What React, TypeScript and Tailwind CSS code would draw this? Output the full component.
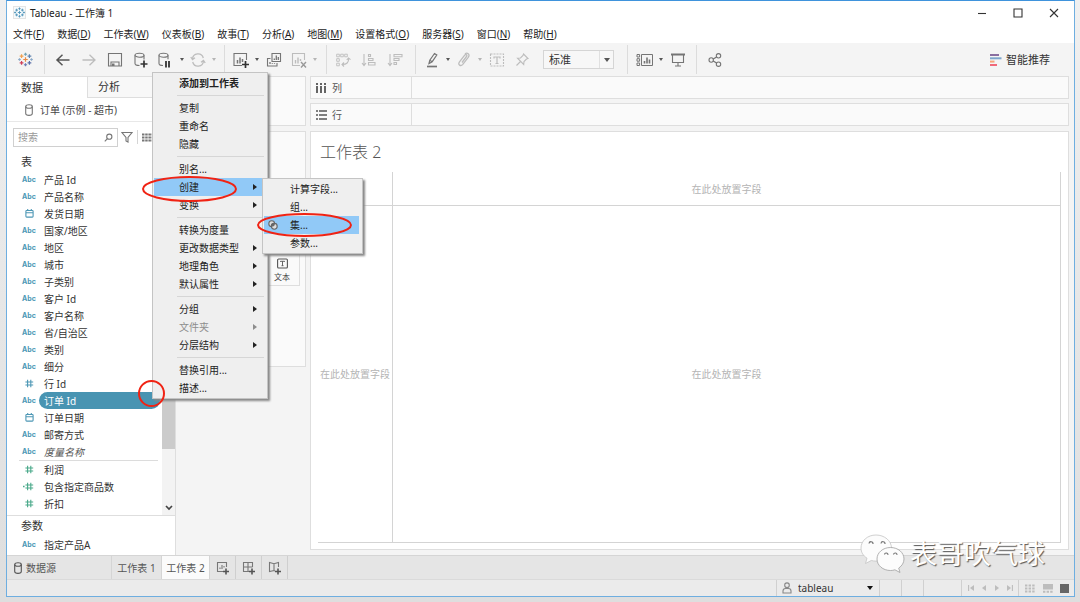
import type { ReactNode } from "react"

type Kind = "abc" | "date" | "dimNum" | "num" | "calc"

const MENUS = [
  ["文件", "F"], ["数据", "D"], ["工作表", "W"], ["仪表板", "B"], ["故事", "T"], ["分析", "A"],
  ["地图", "M"], ["设置格式", "O"], ["服务器", "S"], ["窗口", "N"], ["帮助", "H"],
]

const DIMENSIONS: { name: string; kind: Kind; selected?: boolean; italic?: boolean }[] = [
  { name: "产品 Id", kind: "abc" },
  { name: "产品名称", kind: "abc" },
  { name: "发货日期", kind: "date" },
  { name: "国家/地区", kind: "abc" },
  { name: "地区", kind: "abc" },
  { name: "城市", kind: "abc" },
  { name: "子类别", kind: "abc" },
  { name: "客户 Id", kind: "abc" },
  { name: "客户名称", kind: "abc" },
  { name: "省/自治区", kind: "abc" },
  { name: "类别", kind: "abc" },
  { name: "细分", kind: "abc" },
  { name: "行 Id", kind: "dimNum" },
  { name: "订单 Id", kind: "abc", selected: true },
  { name: "订单日期", kind: "date" },
  { name: "邮寄方式", kind: "abc" },
  { name: "度量名称", kind: "abc", italic: true },
]

const MEASURES: { name: string; kind: Kind }[] = [
  { name: "利润", kind: "num" },
  { name: "包含指定商品数", kind: "calc" },
  { name: "折扣", kind: "num" },
]

// Mỗi nhóm được ngăn cách bằng một đường kẻ
const CONTEXT_MENU: { label: string; bold?: boolean; sub?: boolean; active?: boolean; disabled?: boolean }[][] = [
  [{ label: "添加到工作表", bold: true }],
  [{ label: "复制" }, { label: "重命名" }, { label: "隐藏" }],
  [{ label: "别名..." }, { label: "创建", sub: true, active: true }, { label: "变换", sub: true }],
  [
    { label: "转换为度量" },
    { label: "更改数据类型", sub: true },
    { label: "地理角色", sub: true },
    { label: "默认属性", sub: true },
  ],
  [{ label: "分组", sub: true }, { label: "文件夹", sub: true, disabled: true }, { label: "分层结构", sub: true }],
  [{ label: "替换引用..." }, { label: "描述..." }],
]

const SUB_MENU = ["计算字段...", "组...", "集...", "参数..."]

function Icon({ w = 16, h = 16, className = "", children }: { w?: number; h?: number; className?: string; children: ReactNode }) {
  return (
    <svg width={w} height={h} viewBox={`0 0 ${w} ${h}`} fill="none" stroke="currentColor" strokeWidth="1.1" className={`shrink-0 ${className}`}>
      {children}
    </svg>
  )
}

function Tool({ label, wide, dim, children }: { label: string; wide?: boolean; dim?: boolean; children: ReactNode }) {
  return (
    <button aria-label={label} className={`flex items-center justify-center ${wide ? "w-[26px]" : "w-6"} ${dim ? "text-[#bdbdbd]" : "text-[#757575]"}`}>
      {children}
    </button>
  )
}

function Caret({ dim }: { dim?: boolean }) {
  return (
    <button aria-label="更多" className={`flex w-2 items-center justify-center ${dim ? "text-[#b5b5b5]" : "text-[#555]"}`}>
      <svg width="4" height="3" viewBox="0 0 4 3" fill="currentColor"><path d="M0 0h4L2 3z" /></svg>
    </button>
  )
}

function Logo({ size, mono }: { size: number; mono?: boolean }) {
  const c = mono ? ["#4f93b8"] : ["#eb8a44", "#6fa3b5", "#d0405a", "#5b6fa8", "#f0a050", "#5f83b0", "#6b7bb5", "#8aa9c8", "#8aa9c8"]
  const pts = [[8, 8, 2.4], [8, 2.4, 1.7], [3.8, 11.5, 2], [12.2, 11.5, 2], [3.8, 4.5, 2], [12.2, 4.5, 2], [8, 13.6, 1.7], [1.6, 8, 1.4], [14.4, 8, 1.4]]
  return (
    <svg width={size} height={size} viewBox="0 0 16 16" className="shrink-0">
      {pts.map(([x, y, r], i) => (
        <path key={i} d={`M${x - r} ${y}h${r * 2}M${x} ${y - r}v${r * 2}`} stroke={c[i % c.length]} strokeWidth="1.3" />
      ))}
    </svg>
  )
}

function Cylinder({ className }: { className?: string }) {
  return (
    <Icon w={8} h={12} className={className}>
      <ellipse cx="4" cy="2.5" rx="3.3" ry="1.8" />
      <path d="M.7 2.5v7c0 1 1.5 1.9 3.3 1.9s3.3-.9 3.3-1.9v-7" />
    </Icon>
  )
}

function KindIcon({ kind }: { kind: Kind }) {
  if (kind === "abc") return <span className="font-[Inter,sans-serif] text-[7px] font-bold text-[#4d97b5]">Abc</span>
  if (kind === "date") {
    return (
      <Icon w={9} h={9} className="text-[#4d97b5]">
        <rect x=".9" y="1.5" width="7.2" height="6.6" rx=".8" />
        <path d="M1 3.8h7M2.7 0v2M6.3 0v2" />
      </Icon>
    )
  }
  return (
    <Icon w={12} h={9} className={kind === "dimNum" ? "text-[#4d97b5]" : "text-[#4aa98a]"}>
      <path d="M4.6 .8v7.4M7.8 .8v7.4M2.4 3h7.8M2.4 6h7.8" />
      {kind === "calc" && <path d="M0 4.5h1.6" strokeWidth="1.6" />}
    </Icon>
  )
}

function Field({ name, kind, selected, italic }: { name: string; kind: Kind; selected?: boolean; italic?: boolean }) {
  return (
    <button className="flex h-[17px] w-full items-center pl-3 text-left">
      <span className="flex w-5 shrink-0 items-center justify-center">
        <KindIcon kind={kind} />
      </span>
      <span
        className={`mr-0.5 flex h-[17px] flex-1 items-center pl-[5px] whitespace-nowrap
          ${selected ? "rounded-full bg-[#4894b2] text-white" : italic ? "italic text-[#555]" : "text-[#333]"}`}
      >
        {name}
      </span>
    </button>
  )
}

function Toolbar() {
  const sep = "w-px self-stretch my-0.5 bg-[#dcdcdc]"
  return (
    <div className="flex h-[33px] shrink-0 items-stretch bg-[#f4f4f4]">
      <button aria-label="开始页面" className="flex w-[37px] items-center justify-center">
        <Logo size={15} />
      </button>
      <div className={sep} />
      <div className="flex pr-1.5 pl-[5px]">
        <Tool wide label="撤消"><Icon><path d="M14.5 8H2M7.5 2.8L2 8l5.5 5.2" strokeWidth="1.5" stroke="#555" /></Icon></Tool>
        <Tool wide dim label="重做"><Icon><path d="M1.5 8H14M8.5 2.8L14 8l-5.5 5.2" strokeWidth="1.3" /></Icon></Tool>
        <Tool wide label="保存">
          <Icon><path d="M1.5 1.5h13v12.5h-13zM4 14v-4h8V14" /><path d="M5 11.500h2.500V14H5z" fill="currentColor" stroke="none" /></Icon>
        </Tool>
        <Tool wide label="新建数据源">
          <Icon><ellipse cx="6.500" cy="3.200" rx="4.500" ry="2" /><path d="M2 3.200v8.300c0 1 1.500 2 4.500 2M11 3.200v4.300" /><path d="M7.500 12h7M11 8.500v7" stroke="#333" strokeWidth="1.700" /></Icon>
        </Tool>
        <Tool label="暂停自动更新">
          <Icon><ellipse cx="5.500" cy="3.200" rx="4.500" ry="2" /><path d="M1 3.200v8.300c0 1 1.500 2 4 2M10 3.200v4" /><path d="M8 9v6.500M11 9v6.500" stroke="#333" strokeWidth="1.800" /></Icon>
        </Tool>
        <Caret />
        <Tool dim label="运行更新">
          <Icon><path d="M2.500 7a5.500 5.500 0 0 1 10.800-1M13.500 9A5.500 5.500 0 0 1 2.700 10M.8 5l1.700 2.500L5 5.800M15.200 11l-1.700-2.500L11 10.200" strokeWidth="1.300" /></Icon>
        </Tool>
        <Caret dim />
      </div>
      <div className={sep} />
      <div className="flex pr-[7px] pl-1">
        <Tool label="新建工作表">
          <Icon><path d="M9 13.500H1v-12h12.500V8" /><path d="M4.500 11.500V8M7 11.500V5.500M9.500 10V7" strokeWidth="1.500" /><path d="M9 12.500h7M12.500 9v7" stroke="#333" strokeWidth="1.700" /></Icon>
        </Tool>
        <Caret />
        <Tool wide label="复制工作表">
          <Icon><path d="M6 1.500h8.500v8H6zM4.500 6.500h-3v7.500H11v-3" /><path d="M8.300 8V6.500M10.300 8V3.500M12.300 8V5M4 12v-2M6.300 12v-.8M8.500 12v-.8" strokeWidth="1.300" /></Icon>
        </Tool>
        <Tool dim label="清除工作表">
          <Icon><path d="M9 13.500H1.500v-12h12V8" /><path d="M4.500 11.500V8M7 11.500V5.500M9.500 9V7" strokeWidth="1.400" /><path d="M10 10l5 5.500M15 10l-5 5.500" stroke="#999" strokeWidth="1.400" /></Icon>
        </Tool>
        <Caret dim />
      </div>
      <div className={sep} />
      <div className="flex pr-[7px] pl-[3px]">
        <Tool wide dim label="交换行和列">
          <Icon><path d="M1.700 2.200h2.600v2.600H1.700zM5.700 2.200h2.600v2.600H5.700zM9.700 2.200h2.600v2.600H9.700zM1.700 6.700h2.600v2.600H1.700zM1.700 11.200h2.600v2.600H1.700z" strokeWidth=".9" /><path d="M13.500 6.500c.5 4-2 6-6 6M11.700 8l1.800-2 2 1.700M9 10.500l-2 2 2 2" /></Icon>
        </Tool>
        <Tool wide dim label="升序排序">
          <Icon><path d="M3 2v11M1 11l2 2.500L5 11M7.500 2.500h2v2h-2zM7.500 6.500h4.500v2H7.500zM7.500 10.500H14v2.500H7.500z" /></Icon>
        </Tool>
        <Tool wide dim label="降序排序">
          <Icon><path d="M3 2v11M1 11l2 2.500L5 11M7 2.500h8v2.300H7zM7 6.500h5v2H7zM7 10.500h2.500v2H7z" /></Icon>
        </Tool>
      </div>
      <div className={sep} />
      <div className="flex pl-1">
        <Tool label="突出显示">
          <Icon><path d="M5 11.500l.8-3.300L10.500 1.500l2.300 1.500-4.600 6.700zM5.800 8.200l2.400 1.500" strokeWidth="1.200" /><path d="M3 14.500h10" strokeWidth="1.700" /></Icon>
        </Tool>
        <Caret />
        <Tool dim label="组成员">
          <Icon><path d="M6 10.500l4.500-6c1.200-1.500-.7-2.800-1.800-1.300L3.500 9.800c-2 3 1.200 5 3.300 2.500l5.400-7C14.500 2 11 .2 9 2" strokeWidth="1.300" /></Icon>
        </Tool>
        <Caret dim />
        <Tool wide dim label="显示标记标签">
          <Icon><path d="M1.500 2h13v12h-13z" strokeDasharray="2 1" /><path d="M5 6.500V5h6v1.500M8 5v6.500M6.500 11.500h3" strokeWidth="1.200" /></Icon>
        </Tool>
        <Tool dim label="固定轴">
          <Icon><path d="M9.500 2l4.500 4.500-1.500.5-2.500 2.500-.3 3L3.500 6.200l3-.2L9 3.500zM6.500 9.500L2.500 13.500" /></Icon>
        </Tool>
      </div>
      <div className="relative my-[7px] mr-[13px] ml-[9px] w-[71px]">
        <select aria-label="适合" className="h-[19px] w-full appearance-none border border-[#d5d5d5] bg-[#f7f7f7] pl-[5px] text-[11px] leading-4 text-[#333]">
          <option>标准</option>
        </select>
        <span className="pointer-events-none absolute inset-y-px right-px flex w-3.5 items-center justify-center border-l border-[#e0e0e0] text-[#555]">
          <svg width="6" height="4" viewBox="0 0 6 4" fill="currentColor"><path d="M0 0h6L3 4z" /></svg>
        </span>
      </div>
      <div className={sep} />
      <div className="flex px-[5px]">
        <Tool label="显示/隐藏卡">
          <Icon w={18}><path d="M1 2.500h2.600V5H1zM1 6.700h2.600v2.500H1zM1 11h2.600v2.500H1zM5.500 2.500h11v11h-11z" strokeWidth="1" /><path d="M8.500 11.500V9M11 11.500v-6M13.500 11.500v-4" strokeWidth="1.600" /></Icon>
        </Tool>
        <Caret />
        <Tool wide label="演示模式">
          <Icon><path d="M1 2.500h14" strokeWidth="2" /><path d="M2.500 3v7.500h11V3M8 10.500V14M5 14h6" /></Icon>
        </Tool>
      </div>
      <div className={sep} />
      <button aria-label="共享" className="flex w-9 items-center justify-center text-[#757575]">
        <Icon><circle cx="4.200" cy="8" r="2.200" /><circle cx="11.500" cy="3.800" r="2.200" /><circle cx="11.500" cy="12.200" r="2.200" /><path d="M6.200 7l3.400-2M6.200 9l3.400 2" strokeWidth="1.300" /></Icon>
      </button>
      <button className="mr-6 ml-auto flex items-center gap-1 text-[11px] text-[#333]">
        <svg width="12" height="14" viewBox="0 0 12 14">
          <path d="M0 2h9" stroke="#8a6fa0" strokeWidth="2" />
          <path d="M0 5.300h11.500" stroke="#7ea6cc" strokeWidth="2" />
          <path d="M0 8.600h4.500" stroke="#f5a77a" strokeWidth="2" />
          <path d="M0 12h7" stroke="#f0697a" strokeWidth="2" />
        </svg>
        智能推荐
      </button>
    </div>
  )
}

function DataPane() {
  return (
    <aside className="flex w-[169px] shrink-0 flex-col border-r border-[#dedede] bg-white">
      <div className="flex h-[22px] text-[11px] text-[#333]">
        <button className="w-20 border-t border-[#e0e0e0] pl-3.5 text-left">数据</button>
        <button className="flex-1 border border-r-0 border-[#dedede] bg-[#f8f8f8] pl-2.5 text-left">分析</button>
      </div>
      <button className="flex h-6 items-center gap-[7px] border-b border-[#e8e8e8] pl-[18px] text-[#444]">
        <Cylinder className="text-[#777]" />
        订单 (示例 - 超市)
      </button>
      <div className="flex h-[30px] items-center pl-1.5 text-[#777]">
        <label className="flex h-[19px] w-[105px] items-center border border-[#d0d0d0] pr-1 pl-1">
          <input aria-label="搜索" placeholder="搜索" className="w-0 flex-1 leading-4 outline-none placeholder:text-[#999]" />
          <Icon w={9} h={9}><circle cx="5.300" cy="3.700" r="2.600" /><path d="M3.400 5.600L.8 8.300" /></Icon>
        </label>
        <button aria-label="筛选" className="ml-[3px] pr-1"><Icon w={12} h={12}><path d="M1 1.500h10L7 6.500V11L5 10V6.500z" /></Icon></button>
        <span className="h-3.5 w-px bg-[#d5d5d5]" />
        <button aria-label="查看数据" className="ml-1">
          <Icon w={12} h={9}><path d="M0 1.500h12M0 4.500h12M0 7.500h12" strokeWidth="2" strokeDasharray="2.500 .7" /></Icon>
        </button>
      </div>
      <div className="flex flex-1">
        <div className="w-[155px] shrink-0">
          <h2 className="flex h-[19px] items-center pl-3.5 text-[11px] text-[#333]">表</h2>
          {DIMENSIONS.map(f => <Field key={f.name} {...f} />)}
          <div className="mr-1 ml-3 border-b border-[#dcdcdc]" />
          {MEASURES.map(f => <Field key={f.name} {...f} />)}
        </div>
        <div className="flex flex-1 flex-col bg-[#f3f3f3]">
          <div className="h-[297px] bg-[#cbcbcb]" />
          <div className="flex flex-1 items-end justify-center pb-1 text-[#444]">
            <Icon w={8} h={6}><path d="M1 1l3 3 3-3" strokeWidth="1.700" /></Icon>
          </div>
        </div>
      </div>
      <div className="border-t border-[#dedede] pb-0.5">
        <h2 className="flex h-5 items-center pl-3.5 text-[11px] text-[#333]">参数</h2>
        <Field name="指定产品A" kind="abc" />
      </div>
    </aside>
  )
}

function Shelf({ label, children }: { label: string; children: ReactNode }) {
  return (
    <div className="flex h-[23px] border border-[#dedede] bg-[#fafafa]">
      <div className="flex w-[101px] items-center gap-[5px] border-r border-[#dedede] pl-1 text-[#555]">
        {children}
        {label}
      </div>
    </div>
  )
}

function Worksheet() {
  const drop = "flex items-center justify-center whitespace-nowrap border-[#d4d4d4] text-[#b4b4b4]"
  return (
    <main className="flex min-w-0 flex-1 flex-col pr-[5px] pb-[5px]">
      <div className="flex flex-col gap-1">
        <Shelf label="列">
          <Icon w={12} h={12}><path d="M2 1v2M6 1v2M10 1v2M2 4v7M6 4v7M10 4v7" strokeWidth="1.800" /></Icon>
        </Shelf>
        <Shelf label="行">
          <Icon w={12} h={12}><path d="M1 2h2M1 6h2M1 10h2M4 2h8M4 6h8M4 10h8" strokeWidth="1.600" /></Icon>
        </Shelf>
      </div>
      <section className="mt-[5px] flex flex-1 flex-col border border-[#dedede] bg-white px-[7px] pb-1.5">
        <h1 className="flex h-10 items-center pl-0.5 text-[16px] font-light text-[#555]">工作表 2</h1>
        <div className="grid flex-1 grid-cols-[75px_1fr] grid-rows-[34px_1fr] border-r border-b border-[#d4d4d4]">
          <div className="border-r border-b border-[#d4d4d4]" />
          <div className={`${drop} border-b`}>在此处放置字段</div>
          <div className={`${drop} border-r`}>在此处放置字段</div>
          <div className={drop}>在此处放置字段</div>
        </div>
      </section>
    </main>
  )
}

function SheetTabs() {
  const add = "flex w-[26px] items-center justify-center border-r border-[#cfcfcf] text-[#777]"
  const plus = <path d="M7 10.500h6M10 7.500v6" strokeWidth="1.600" stroke="#555" />
  return (
    <div className="flex h-6 shrink-0 border-t border-[#d5d5d5] bg-[#e5e5e5] text-[#555]">
      <button className="flex w-[105px] items-center gap-1 border-r border-[#d5d5d5] pl-[7px]">
        <Cylinder />
        数据源
      </button>
      <button className="w-[50px] border-r border-[#d5d5d5]">工作表 1</button>
      <button className="w-12 border-r border-[#d5d5d5] bg-[#fbfbfb]">工作表 2</button>
      <button aria-label="新建工作表" className={add}>
        <Icon w={14} h={14}><path d="M7 10.500H1.500v-9h9V6M4 8V6.500M6 8V4M8 6.500V5" />{plus}</Icon>
      </button>
      <button aria-label="新建仪表板" className={add}>
        <Icon w={14} h={14}><path d="M7 10.500H1.500v-9h9V6M6 1.500v9M1.500 6h9" />{plus}</Icon>
      </button>
      <button aria-label="新建故事" className={add}>
        <Icon w={14} h={14}><path d="M7 10l-1-.5-4.500 1v-9L6 2.800l4.500-1.300V6M6 3v6.500" />{plus}</Icon>
      </button>
    </div>
  )
}

function StatusBar() {
  const cell = "border-l border-[#d0d0d0]"
  return (
    <footer className="flex h-[17px] shrink-0 justify-end border-t border-[#dadada] bg-[#ebebeb] text-[#bdbdbd]">
      <label className={`${cell} flex w-[103px] items-center gap-1.5 pr-1.5 pl-[5px]`}>
        <Icon w={10} h={12} className="text-[#888]"><circle cx="5" cy="3.200" r="2.300" /><path d="M1 11V9c0-1.500 1-2.500 2.500-2.500h3C8 6.500 9 7.500 9 9v2z" /></Icon>
        <select aria-label="用户" className="w-0 flex-1 appearance-none text-[#333]">
          <option>tableau</option>
        </select>
        <svg width="6" height="4" viewBox="0 0 6 4" fill="#111"><path d="M0 0h6L3 4z" /></svg>
      </label>
      <div className={`${cell} w-[22px]`} />
      <div className={`${cell} w-[22px]`} />
      <div className={`${cell} w-[38px]`} />
      <div className={`${cell} flex w-[57px] items-center justify-around px-0.5`}>
        <button aria-label="第一个"><Icon w={6} h={6}><path d="M.6 0v6" /><path d="M6 0v6L2 3z" fill="currentColor" stroke="none" /></Icon></button>
        <button aria-label="上一个"><Icon w={6} h={6}><path d="M5 0v6L1 3z" fill="currentColor" stroke="none" /></Icon></button>
        <button aria-label="下一个"><Icon w={6} h={6}><path d="M1 0v6l4-3z" fill="currentColor" stroke="none" /></Icon></button>
        <button aria-label="最后一个"><Icon w={6} h={6}><path d="M5.400 0v6" /><path d="M0 0v6l4-3z" fill="currentColor" stroke="none" /></Icon></button>
      </div>
      <div className={`${cell} flex w-[56px] items-center justify-between pr-[5px] pl-1.5`}>
        <button aria-label="显示标签"><Icon w={10} h={9}><path d="M0 1.500h10M0 4.500h10M0 7.500h10" strokeWidth="2" strokeDasharray="2.400 1.200" /></Icon></button>
        <button aria-label="显示胶片"><Icon w={10} h={9}><path d="M0 0h10v5.500H0z" fill="currentColor" stroke="none" /><path d="M0 7.800h10" strokeWidth="2" strokeDasharray="2.400 1.200" /></Icon></button>
        <button aria-label="显示工作表" className="h-[9px] w-[9px] bg-[#666]" />
      </div>
    </footer>
  )
}

function SubArrow() {
  return <svg width="4" height="6" viewBox="0 0 4 6" fill="currentColor" className="ml-auto"><path d="M0 0v6l4-3z" /></svg>
}

function ContextMenu() {
  return (
    <div role="menu" className="absolute top-[72px] left-[152px] w-[116px] border border-[#c4c4c4] bg-[#efefef] py-px text-[#222] shadow-[2px_2px_2px_#888]">
      {CONTEXT_MENU.map((group, i) => (
        <div key={i}>
          {i > 0 && <div className="mt-[3px] mr-[3px] mb-[3px] ml-6 h-px bg-[#d6d6d6]" />}
          {group.map(item => (
            <button
              key={item.label}
              role="menuitem"
              disabled={item.disabled}
              className={`mx-px flex h-[18px] w-[109px] items-center pr-1.5 pl-[25px] whitespace-nowrap
                ${item.bold ? "font-bold" : ""} ${item.active ? "bg-[#91c9f7]" : ""} ${item.disabled ? "text-[#8d8d8d]" : ""}`}
            >
              {item.label}
              {item.sub && <SubArrow />}
            </button>
          ))}
        </div>
      ))}
    </div>
  )
}

function CreateMenu() {
  return (
    <div role="menu" className="absolute top-[178px] left-[262px] w-[101px] border border-[#c4c4c4] bg-[#efefef] p-px text-[#222] shadow-[2px_2px_2px_#888]">
      {SUB_MENU.map(label => (
        <button
          key={label}
          role="menuitem"
          className={`flex h-[18px] w-[95px] items-center whitespace-nowrap ${label === "集..." ? "bg-[#91c9f7]" : ""}`}
        >
          <span className="flex w-[26px] shrink-0 pl-1 text-[#666]">
            {label === "集..." && (
              <Icon w={10} h={10}>
                <circle cx="3.700" cy="3.700" r="2.900" fill="#ddd" />
                <circle cx="6.300" cy="6.300" r="2.900" fill="#ddd" />
                <path d="M3.500 5.800c0-1.500 1-2.300 2.300-2.300 1 1 .3 3-2.300 2.300z" fill="currentColor" />
              </Icon>
            )}
          </span>
          {label}
        </button>
      ))}
    </div>
  )
}

// Khoanh đỏ hướng dẫn các bước
function Annotations() {
  return (
    <svg width="380" height="420" viewBox="0 0 380 420" fill="none" stroke="#f02314" strokeWidth="2" className="pointer-events-none absolute top-0 left-0">
      <ellipse cx="189.500" cy="189" rx="46.500" ry="12" />
      <ellipse cx="304.500" cy="225" rx="46.500" ry="11" />
      <circle cx="151.500" cy="393.500" r="12.500" />
    </svg>
  )
}

function Watermark() {
  return (
    <div className="pointer-events-none absolute right-[35px] bottom-[28px] flex items-center gap-1 text-[27px] leading-10 text-white [text-shadow:1px_1px_1px_#555]">
      <svg width="46" height="40" viewBox="0 0 46 40" fill="#fcfcfc" stroke="#a0a0a0" strokeWidth=".8">
        <path d="M16 1C7.500 1 1 6.800 1 14c0 4.300 2.200 7.800 6 10.200L5.500 29.500l5.800-3c1.600.4 3.200.6 4.700.6 8.500 0 15.500-5.700 15.500-13S24.500 1 16 1z" stroke="#c4c4c4" />
        <path d="M30.500 13.500C23 13.500 17 18.500 17 25s6 11.500 13.500 11.500c1.500 0 3-.2 4.400-.7l5.100 2.700-1.300-4.400c3.200-2.200 5.300-5.300 5.300-9.100 0-6.500-6-11.500-13.500-11.500z" />
        <g fill="none" stroke="#777" strokeWidth="1.200">
          <path d="M9 9.500a2 2 0 0 1 4 .5M21 9.500a2 2 0 0 1 4 .5M24.500 20.500a1.700 1.700 0 0 1 3.400.4M33.500 20.500a1.700 1.700 0 0 1 3.400.4" />
        </g>
      </svg>
      表哥吹气球
    </div>
  )
}

export default function App() {
  return (
    <div className="relative flex min-h-screen flex-col bg-linear-to-b from-[#f0f0f0] to-[#dedede] pr-[5px] pb-[5px] pl-1.5 font-['Noto_Sans','Noto_Sans_CJK_SC',sans-serif] text-[10px] leading-4">
      <div className="flex flex-1 flex-col border border-[#6eaee0] border-t-[#3f93dc] bg-[#f4f4f4]">
        <header className="flex h-[23px] shrink-0 items-center bg-white pl-1.5 text-[#222]">
          <span className="border border-[#e4e4e4] bg-[#f6fafc]"><Logo size={11} mono /></span>
          <span className="ml-1">Tableau - 工作簿 1</span>
          <div className="mr-3.5 ml-auto flex gap-6 text-[#333]">
            <button aria-label="最小化"><Icon w={12} h={12}><path d="M2 6.500h8" /></Icon></button>
            <button aria-label="最大化"><Icon w={12} h={12}><path d="M2 2h8v8H2z" /></Icon></button>
            <button aria-label="关闭"><Icon w={12} h={12}><path d="M2 2l8 8M10 2l-8 8" /></Icon></button>
          </div>
        </header>
        <nav className="flex h-[19px] shrink-0 items-center gap-[13px] bg-white pl-1.5 text-[#222]">
          {MENUS.map(([label, key]) => (
            <button key={key}>{label}(<u>{key}</u>)</button>
          ))}
        </nav>
        <Toolbar />
        <div className="flex flex-1">
          <DataPane />
          <div className="flex w-[134px] shrink-0 flex-col gap-[5px] px-1">
            <div className="h-[50px] border border-[#dedede] bg-[#fafafa]" />
            <div className="flex h-[236px] items-start justify-end border border-[#dedede] bg-[#fafafa] pt-[112px] pr-[5px]">
              <button className="flex h-[42px] w-9 flex-col items-center justify-end border border-[#dedede] text-[8px] text-[#444]">
                <Icon w={11} h={11} className="text-[#555]"><rect x=".6" y="1" width="9.800" height="9" rx="1" /><path d="M3.500 4V3.300h4V4M5.500 3.300v4.400M4.500 7.700h2" strokeWidth=".9" /></Icon>
                文本
              </button>
            </div>
          </div>
          <Worksheet />
        </div>
        <SheetTabs />
        <StatusBar />
      </div>
      <ContextMenu />
      <CreateMenu />
      <Annotations />
      <Watermark />
    </div>
  )
}
